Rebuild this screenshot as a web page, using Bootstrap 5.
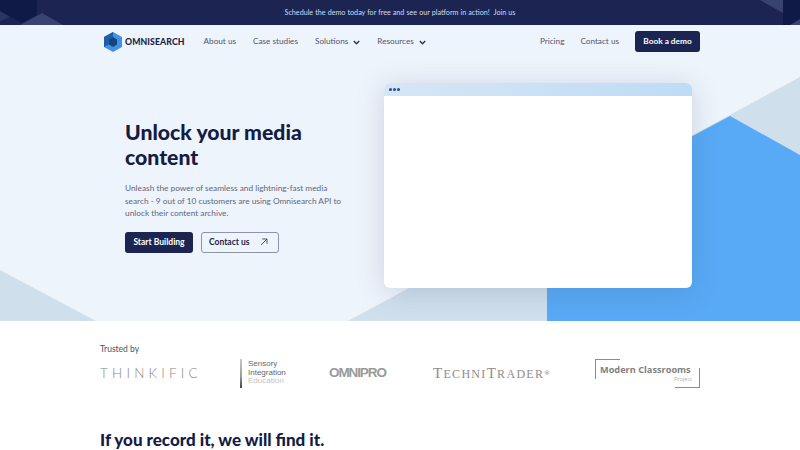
<!DOCTYPE html>
<html lang="en">
<head>
  <meta charset="UTF-8">
  <title>Omnisearch</title>
  <link href="https://cdn.jsdelivr.net/npm/bootstrap@5.3.1/dist/css/bootstrap.min.css" rel="stylesheet">
  <style>
    body { font-family: Lato, "Liberation Sans", sans-serif; color: #141c45; background: #fff; overflow: hidden; }
    .wrap-main { width: 600px; margin: 0 auto; }
    .promo { height: 25px; padding-top: 1px; background: #1c2552; color: #d3d9ec; font-size: 7.2px; position: relative; overflow: hidden; }
    .promo span { position: relative; word-spacing: .2px; }
    .promo-art { position: absolute; inset: 0; width: 100%; height: 100%; }
    .hero { height: 296px; background: #eef4fb; position: relative; overflow: hidden; }
    .hero-art { position: absolute; inset: 0; width: 100%; height: 100%; }
    .top-nav { height: 33px; position: relative; font-size: 8.2px; color: #4d556f; padding-left: 4px; }
    .top-nav a { color: #4d556f; text-decoration: none; }
    .top-nav a.brand-link { gap: 3px; }
    .brand-text { font-size: 8.7px; font-weight: 900; color: #1d2547; letter-spacing: .1px; }
    .menu-left { margin-left: 19px; gap: 17px; }
    .menu-right { gap: 16px; }
    .chev { margin-left: 5px; }
    .top-nav a.btn-dark-navy { background: #1c2552; color: #fff; border: 0; border-radius: 3px; font-size: 8.3px; font-weight: 700; padding: 0; height: 21px; width: 65px; line-height: 21px; }
    .hero-body { position: relative; height: 263px; padding-left: 25px; }
    .hero-copy { width: 230px; padding-top: 62px; }
    .hero-copy h1 { font-size: 21.2px; font-weight: 900; line-height: 25px; color: #141c45; margin-bottom: 12px; }
    .hero-copy p { font-size: 8.3px; line-height: 12.5px; color: #5e6780; margin-bottom: 12px; white-space: nowrap; }
    .btn-start { background: #1c2552; color: #fff; border: 0; border-radius: 3px; font-size: 8.5px; font-weight: 700; width: 68px; height: 21px; padding: 0; }
    .btn-contact { background: transparent; color: #1d2547; border: 1.5px solid #8d95a8; border-radius: 3px; font-size: 8.5px; font-weight: 700; width: 78px; height: 21px; padding: 0 10px 0 7px; }
    .mock-window { position: absolute; left: 284px; top: 25px; width: 308px; height: 205px; background: #fff; border-radius: 6px; overflow: hidden; box-shadow: 0 4px 28px rgba(70, 95, 130, .22); }
    .mock-bar { height: 13px; background: linear-gradient(90deg, #d6e6f6, #bddcf5); padding-left: 5px; gap: 1px; }
    .mock-bar i { width: 3px; height: 3px; border-radius: 50%; background: #2f4c8c; display: block; }
    .trusted-label { font-size: 8.5px; color: #4a5268; padding-top: 23px; line-height: 11px; }
    .logo-row { height: 36px; color: #8c8c8c; opacity: .99; }
    .logo-thinkific { font-family: Lato, sans-serif; font-weight: 300; font-size: 13.5px; letter-spacing: 4.2px; width: 99px; white-space: nowrap; color: #888; }
    .logo-sensory-wrap { margin-left: 41px; width: 46px; }
    .logo-sensory { font-family: "Liberation Sans", sans-serif; font-size: 8px; line-height: 8.5px; color: #666; }
    .logo-sensory .faded { color: #c4c4c4; }
    .sensory-bar { width: 2px; height: 29px; flex-shrink: 0; background: linear-gradient(#c9c9c9, #999 60%, #444); margin-right: 6px; }
    .logo-omni { font-family: "Liberation Sans", sans-serif; font-size: 13.5px; font-weight: 700; color: #999; letter-spacing: -1.1px; margin-left: 43px; width: 57px; white-space: nowrap; }
    .logo-techni { font-family: "Liberation Serif", serif; font-size: 15px; color: #8c8c8c; letter-spacing: 1.3px; white-space: nowrap; margin-left: 47px; }
    .logo-techni small { font-size: 12px; }
    .logo-techni sup { font-size: 7px; font-weight: 700; top: -.4em; }
    .logo-modern { width: 105px; height: 29px; margin-left: auto; position: relative; font-family: "Open Sans", sans-serif; font-weight: 700; font-size: 9.2px; color: #808080; padding: 5px 0 0 5px; white-space: nowrap; line-height: 11px; }
    .logo-modern::before { content: ""; position: absolute; left: 0; top: 0; width: 25px; height: 20px; border-left: 1px solid #8a8a8a; border-top: 1px solid #8a8a8a; }
    .logo-modern::after { content: ""; position: absolute; right: 0; bottom: 0; width: 25px; height: 20px; border-right: 1px solid #8a8a8a; border-bottom: 1px solid #8a8a8a; }
    .logo-modern div { font-size: 5.5px; font-weight: 400; text-align: right; padding-right: 8px; line-height: 7px; margin-top: 1px; color: #b0b0b0; }
    .headline { font-size: 17px; font-weight: 900; color: #141c45; margin-top: 38px; line-height: 22px; }
  </style>
</head>
<body>

<div class="promo d-flex align-items-center justify-content-center">
  <svg class="promo-art" viewBox="0 0 800 25" preserveAspectRatio="none">
    <polygon points="20,25 42,13 63,25" fill="#39436f"/>
    <polygon points="0,0 37,0 37,15 22,23 0,11" fill="#0f1a47"/>
    <polygon points="0,11 10,17 0,21" fill="#2b3563"/>
    <polygon points="760,0 783,0 783,13" fill="#39436f"/>
    <polygon points="783,0 800,0 800,25 783,25" fill="#0f1a47"/>
    <polygon points="800,19 790,25 800,25" fill="#39436f"/>
  </svg>
  <span>Schedule the demo today for free and see our platform in action! &nbsp;Join us</span>
</div>

<section class="hero">
  <svg class="hero-art" viewBox="0 0 800 296">
    <polygon points="348,296 800,52 800,296" fill="#d0dfec"/>
    <polygon points="547,296 547,189 730,91 800,130 800,296" fill="#58a9f6"/>
    <polygon points="0,245 96,296 0,296" fill="#d0dfec"/>
  </svg>

  <nav class="top-nav wrap-main d-flex align-items-center">
    <a href="#" class="brand-link d-flex align-items-center">
      <svg width="18" height="20" viewBox="0 0 18 20">
        <polygon points="9,0 18,5 18,15 9,20 0,15 0,5" fill="#3f93e6"/>
        <polygon points="9,0 9,10 0,15 0,5" fill="#1d5fa8"/>
        <polygon points="9,5 13,7.5 13,12.5 9,15 5,12.5 5,7.5" fill="#17447e"/>
      </svg>
      <span class="brand-text">OMNISEARCH</span>
    </a>
    <div class="d-flex menu-left">
      <a href="#">About us</a>
      <a href="#">Case studies</a>
      <a href="#">Solutions<svg class="chev" width="7" height="5" viewBox="0 0 7 5"><path d="M.8 1 3.5 3.7 6.2 1" fill="none" stroke="#2a3150" stroke-width="1.4"/></svg></a>
      <a href="#">Resources<svg class="chev" width="7" height="5" viewBox="0 0 7 5"><path d="M.8 1 3.5 3.7 6.2 1" fill="none" stroke="#2a3150" stroke-width="1.4"/></svg></a>
    </div>
    <div class="d-flex menu-right align-items-center ms-auto">
      <a href="#">Pricing</a>
      <a href="#">Contact us</a>
      <a href="#" class="btn btn-dark-navy">Book a demo</a>
    </div>
  </nav>

  <div class="hero-body wrap-main">
    <div class="hero-copy">
      <h1>Unlock your media content</h1>
      <p>Unleash the power of seamless and lightning-fast media<br>search - 9 out of 10 customers are using Omnisearch API to<br>unlock their content archive.</p>
      <div class="d-flex gap-2">
        <button class="btn btn-start">Start Building</button>
        <button class="btn btn-contact d-flex align-items-center justify-content-between">Contact us
          <svg width="8" height="8" viewBox="0 0 8 8"><path d="M1 7 7 1M2.2 1H7V5.8" fill="none" stroke="#3c4560" stroke-width=".9"/></svg>
        </button>
      </div>
    </div>
    <div class="mock-window">
      <div class="mock-bar d-flex align-items-center"><i></i><i></i><i></i></div>
    </div>
  </div>
</section>

<section class="wrap-main">
  <div class="trusted-label">Trusted by</div>
  <div class="logo-row d-flex align-items-center">
    <div class="logo-thinkific">THINKIFIC</div>
    <div class="logo-sensory-wrap d-flex align-items-center">
      <div class="sensory-bar"></div>
      <div class="logo-sensory">Sensory<br>Integration<br><span class="faded">Education</span></div>
    </div>
    <div class="logo-omni">OMNIPRO</div>
    <div class="logo-techni">T<small>ECHNI</small>T<small>RADER</small><sup>®</sup></div>
    <div class="logo-modern">Modern Classrooms<div>Project</div></div>
  </div>
  <h2 class="headline">If you record it, we will find it.</h2>
</section>

<script src="https://cdn.jsdelivr.net/npm/bootstrap@5.3.1/dist/js/bootstrap.bundle.min.js"></script>
</body>
</html>
